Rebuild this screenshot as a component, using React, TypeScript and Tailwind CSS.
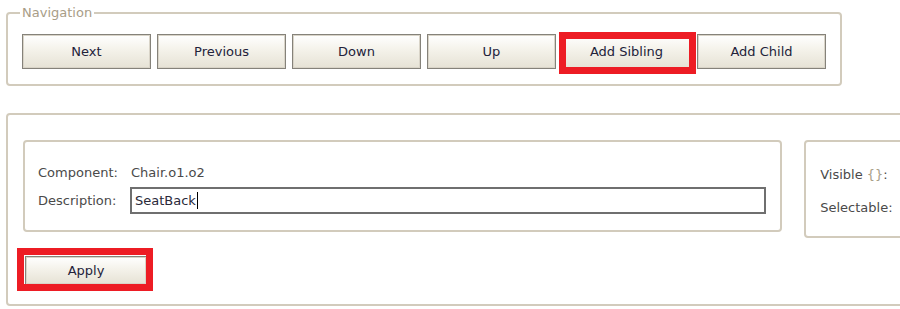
import React from "react";

const navButtons = ["Next", "Previous", "Down", "Up", "Add Sibling", "Add Child"];

function ClassicButton({ label, className = "" }: { label: string; className?: string }) {
  return (
    <button
      type="button"
      className={`flex items-center justify-center border border-[#85827a] bg-[linear-gradient(180deg,#ffffff_0%,#f4f2ea_45%,#e6e2d5_100%)] text-[13px] text-[#22223a] shadow-[inset_0_0_0_1px_#d9d4c8] ${className}`}
    >
      {label}
    </button>
  );
}

function Highlight({ className }: { className: string }) {
  return <div className={`pointer-events-none absolute border-[7px] border-[#ed1c24] ${className}`} />;
}

export default function App() {
  return (
    <div className="relative h-[309px] w-[900px] overflow-hidden bg-white pl-[6px] font-['DejaVu_Sans',sans-serif]">
      <fieldset className="mt-[4px] w-[836px] rounded-[4px] border-2 border-[#d2cbbc] pr-[14px] pb-[15px] pl-[14px]">
        <legend className="ml-[-2px] px-[2px] text-[13px] leading-[17px] text-[#a89d87]">Navigation</legend>
        <div className="flex gap-[6px] pt-[13px]">
          {navButtons.map((b) => (
            <ClassicButton key={b} label={b} className="h-[35px] w-[129px]" />
          ))}
        </div>
      </fieldset>

      <div className="mt-[27px] h-[193px] w-[1000px] rounded-[4px] border-2 border-[#d2cbbc] pt-[25px] pl-[15px]">
        <div className="flex items-start gap-[22px]">
          <div className="h-[92px] w-[760px] rounded-[4px] border-2 border-[#d2cbbc] pt-[23px] pl-[13px] text-[13px] text-[#4a4a4a]">
            <div className="flex h-[16px] items-center">
              <span className="w-[92px]">Component:</span>
              <span className="ml-[1px]">Chair.o1.o2</span>
            </div>
            <div className="mt-[6px] flex items-center">
              <span className="w-[92px]">Description:</span>
              <div className="flex h-[27px] w-[636px] items-center border-2 border-[#6f6f6f] pl-[3px] text-[#2a2a3a]">
                SeatBack<span className="ml-[1px] inline-block h-[17px] w-[1px] bg-black" />
              </div>
            </div>
          </div>
          <div className="h-[98px] w-[200px] rounded-[4px] border-2 border-[#d2cbbc] pt-[25px] pl-[14px] text-[13px] text-[#4a4a4a]">
            <div className="h-[16px] leading-[16px]">
              Visible <span className="text-[#a89d87]">{"{}"}</span>:
            </div>
            <div className="mt-[17px] h-[16px] leading-[16px]">Selectable:</div>
          </div>
        </div>
        <ClassicButton label="Apply" className="mt-[18px] ml-[2px] h-[29px] w-[122px]" />
      </div>

      <Highlight className="top-[32px] left-[559px] h-[42px] w-[137px]" />
      <Highlight className="top-[248px] left-[17px] h-[43px] w-[136px]" />
    </div>
  );
}
